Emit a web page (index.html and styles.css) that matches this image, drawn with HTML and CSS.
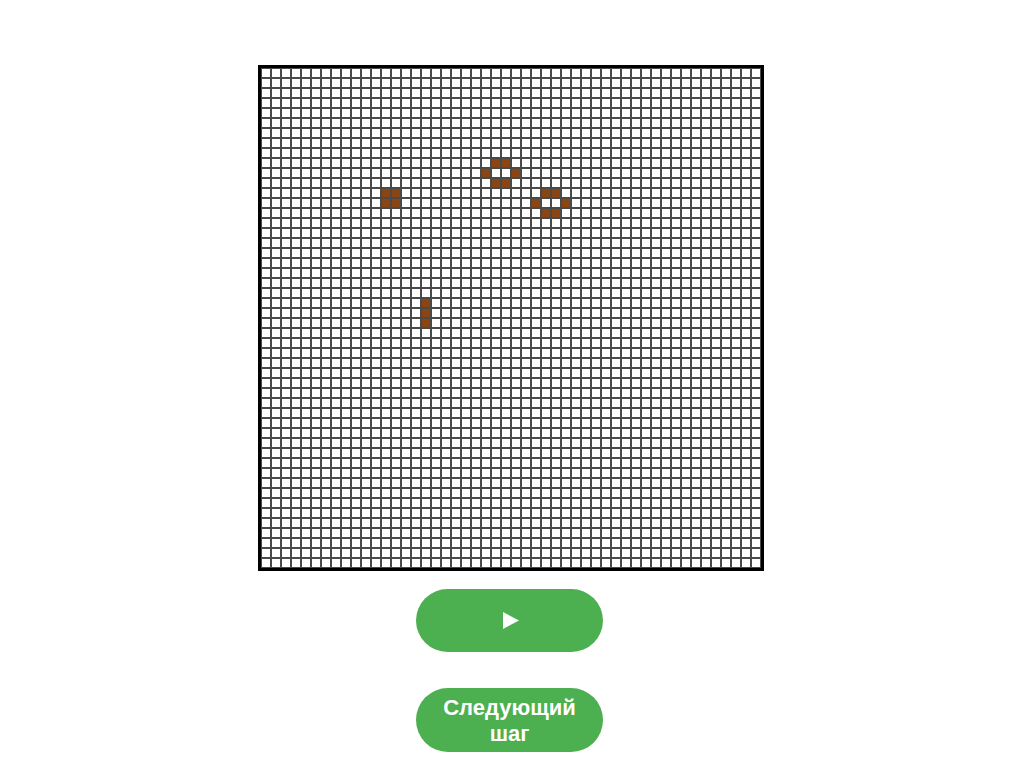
FILE: index.html
```html
<!DOCTYPE html>
<html lang="ru">
<head>
<meta charset="utf-8">
<title>Игра «Жизнь»</title>
<link rel="stylesheet" href="styles.css">
</head>
<body>
<main class="app">
  <div class="board" id="board"></div>
  <div class="controls">
    <button class="btn btn-play" type="button" aria-label="Старт">
      <svg class="play-icon" width="16" height="17" viewBox="0 0 16 17" aria-hidden="true"><polygon points="0,0 16,8.5 0,17" fill="#fff"/></svg>
    </button>
    <button class="btn btn-step" type="button">Следующий шаг</button>
  </div>
</main>
<script src="script.js"></script>
</body>
</html>
```

FILE: styles.css
```css
html, body {
  margin: 0;
  padding: 0;
  background: #ffffff;
}

body {
  font-family: "Liberation Sans", Arial, sans-serif;
}

.app {
  display: flex;
  flex-direction: column;
  align-items: center;
  padding: 65px 0 0 8px;
}

.board {
  display: grid;
  grid-template-columns: repeat(50, 10px);
  grid-auto-rows: 10px;
  border: 3px solid #000;
  background: #fff;
}

.cell {
  box-sizing: border-box;
  width: 10px;
  height: 10px;
  border: 1px solid #4a4a4a;
  background: #fff;
}

.cell.alive {
  background: #8b4513;
}

.controls {
  display: flex;
  flex-direction: column;
  align-items: center;
  gap: 36px;
  margin-top: 18px;
  margin-left: -2px;
}

.btn {
  display: flex;
  align-items: center;
  justify-content: center;
  width: 187px;
  height: 63px;
  padding: 0 16px;
  border: none;
  border-radius: 32px;
  background: #4caf50;
  color: #fff;
  font-family: "Liberation Sans", Arial, sans-serif;
  font-weight: bold;
  font-size: 22px;
  line-height: 26px;
  text-align: center;
  cursor: pointer;
}

.btn-step {
  height: 64px;
  padding-top: 2px;
}

.play-icon {
  display: block;
  margin-left: 2px;
}
```

FILE: script.js
```js
(function () {
  var size = 50;
  var alive = [
    [12,12],[13,12],[12,13],[13,13],
    [23,9],[24,9],[22,10],[25,10],[23,11],[24,11],
    [28,12],[29,12],[27,13],[30,13],[28,14],[29,14],
    [16,23],[16,24],[16,25]
  ];
  var set = {};
  alive.forEach(function (p) { set[p[0] + ',' + p[1]] = true; });
  var board = document.getElementById('board');
  var frag = document.createDocumentFragment();
  for (var r = 0; r < size; r++) {
    for (var c = 0; c < size; c++) {
      var d = document.createElement('div');
      d.className = set[c + ',' + r] ? 'cell alive' : 'cell';
      frag.appendChild(d);
    }
  }
  board.appendChild(frag);
})();
```
